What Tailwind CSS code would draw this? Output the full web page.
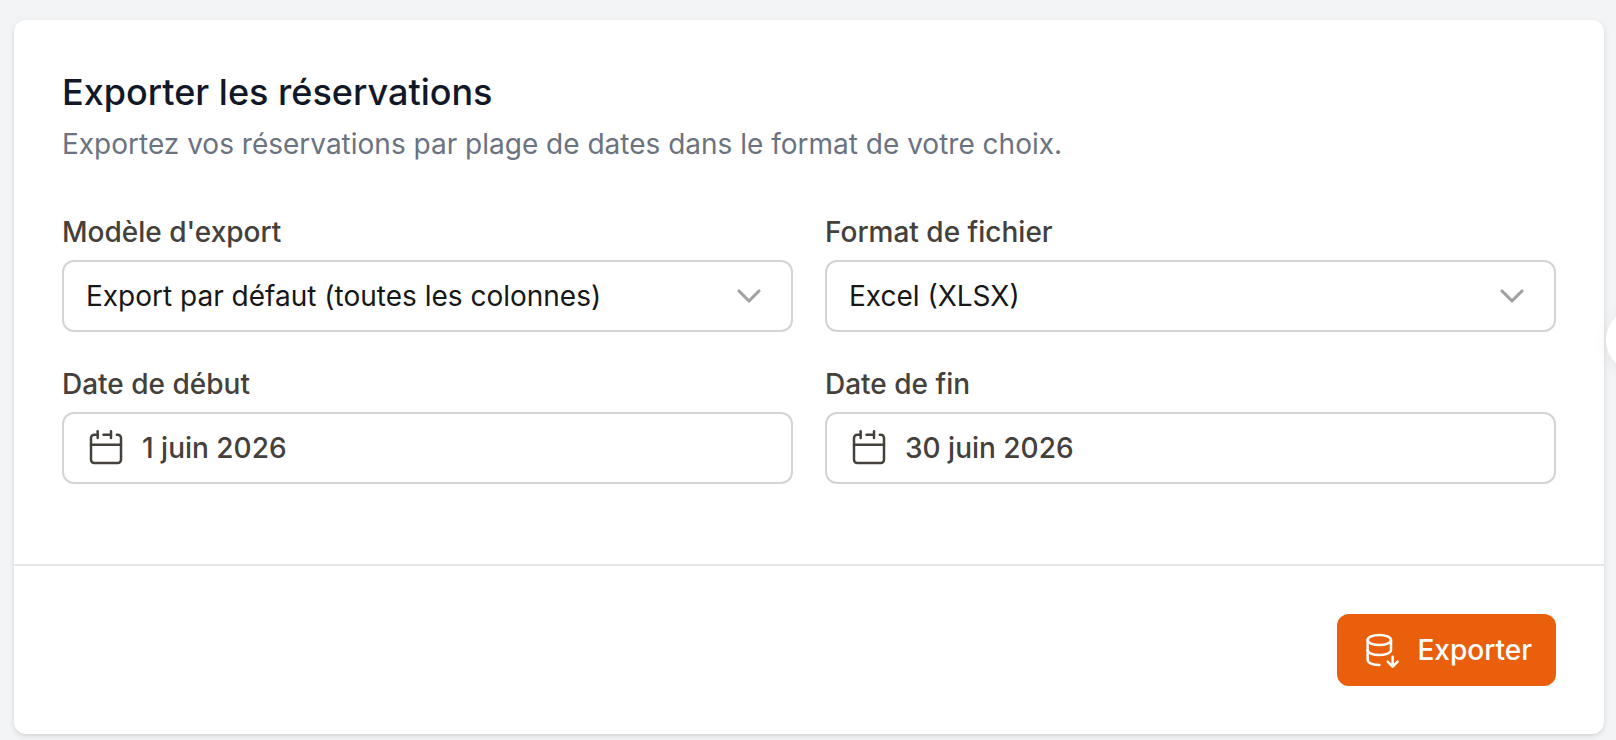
<!DOCTYPE html>
<html lang="fr">
<head>
    <meta charset="UTF-8">
    <meta name="viewport" content="width=device-width, initial-scale=1.0">
    <title>Exporter les réservations</title>
    <script src="https://cdn.jsdelivr.net/npm/@tailwindcss/browser@4"></script>
</head>
<body class="relative min-h-screen overflow-hidden bg-gray-100 pt-5 pr-3 pb-1.5 pl-3.5 font-['Inter',sans-serif] text-[28px] leading-10">
    <form class="rounded-xl bg-white shadow-[0_2px_6px_rgba(0,0,0,0.1),0_2px_4px_-2px_rgba(0,0,0,0.1)]" onsubmit="return false">
        <div class="px-12 pt-12 pb-20">
            <h1 class="text-4xl leading-12 font-medium text-[#111827]">Exporter les réservations</h1>
            <p class="mt-2 text-[#6b7280]">Exportez vos réservations par plage de dates dans le format de votre choix.</p>

            <div class="mt-12 grid grid-cols-2 gap-8">
                <div>
                    <label for="template" class="block font-medium text-[#44403c]">Modèle d'export</label>
                    <div class="relative mt-2">
                        <select id="template" class="block h-18 w-full appearance-none rounded-xl border-2 border-neutral-300 bg-white pr-18 pl-[22px] text-neutral-900">
                            <option>Export par défaut (toutes les colonnes)</option>
                        </select>
                        <svg class="pointer-events-none absolute top-4 right-6 size-10 text-neutral-400" viewBox="0 0 24 24" fill="none" stroke="currentColor" stroke-width="1.9" stroke-linecap="round" stroke-linejoin="round"><path d="M6 9l6 6 6-6"/></svg>
                    </div>
                </div>

                <div>
                    <label for="format" class="block font-medium text-[#44403c]">Format de fichier</label>
                    <div class="relative mt-2">
                        <select id="format" class="block h-18 w-full appearance-none rounded-xl border-2 border-neutral-300 bg-white pr-18 pl-[22px] text-neutral-900">
                            <option>Excel (XLSX)</option>
                        </select>
                        <svg class="pointer-events-none absolute top-4 right-6 size-10 text-neutral-400" viewBox="0 0 24 24" fill="none" stroke="currentColor" stroke-width="1.9" stroke-linecap="round" stroke-linejoin="round"><path d="M6 9l6 6 6-6"/></svg>
                    </div>
                </div>

                <div>
                    <label for="start" class="block font-medium text-[#44403c]">Date de début</label>
                    <div class="mt-2 flex h-18 items-center gap-4 rounded-xl border-2 border-neutral-300 bg-white px-[22px] text-[#44403c]">
                        <svg class="size-10 shrink-0" viewBox="0 0 24 24" fill="none" stroke="currentColor" stroke-width="1.5" stroke-linecap="round" stroke-linejoin="round"><path d="M15 4V2M15 4V6M15 4H10.5M3 10V19C3 20.1046 3.89543 21 5 21H19C20.1046 21 21 20.1046 21 19V10H3Z"/><path d="M3 10V6C3 4.89543 3.89543 4 5 4H7"/><path d="M7 2V6"/><path d="M21 10V6C21 4.89543 20.1046 4 19 4H18.5"/></svg>
                        <input id="start" type="text" value="1 juin 2026" class="w-full min-w-0 font-medium outline-none">
                    </div>
                </div>

                <div>
                    <label for="end" class="block font-medium text-[#44403c]">Date de fin</label>
                    <div class="mt-2 flex h-18 items-center gap-4 rounded-xl border-2 border-neutral-300 bg-white px-[22px] text-[#44403c]">
                        <svg class="size-10 shrink-0" viewBox="0 0 24 24" fill="none" stroke="currentColor" stroke-width="1.5" stroke-linecap="round" stroke-linejoin="round"><path d="M15 4V2M15 4V6M15 4H10.5M3 10V19C3 20.1046 3.89543 21 5 21H19C20.1046 21 21 20.1046 21 19V10H3Z"/><path d="M3 10V6C3 4.89543 3.89543 4 5 4H7"/><path d="M7 2V6"/><path d="M21 10V6C21 4.89543 20.1046 4 19 4H18.5"/></svg>
                        <input id="end" type="text" value="30 juin 2026" class="w-full min-w-0 font-medium outline-none">
                    </div>
                </div>
            </div>
        </div>

        <div class="flex justify-end border-t-2 border-neutral-200 px-12 py-12">
            <button type="submit" class="flex h-18 items-center gap-4 rounded-xl bg-[#ea5f0c] px-6 font-medium text-white hover:bg-orange-700">
                <svg class="size-10" viewBox="0 0 24 24" fill="none" stroke="currentColor" stroke-width="1.5" stroke-linecap="round" stroke-linejoin="round"><ellipse cx="11" cy="6" rx="7" ry="3"/><path d="M18 6v6c0 1.66-3.13 3-7 3s-7-1.34-7-3"/><path d="M4 6v12c0 1.66 3.13 3 7 3"/><path d="M19 16v6m0 0 3-3m-3 3-3-3"/></svg>
                Exporter
            </button>
        </div>
    </form>

    <!-- floating button, mostly off the right edge -->
    <button type="button" aria-label="Aide" class="absolute top-[308px] left-[calc(100%-10px)] size-16 rounded-full bg-white shadow-[0_2px_16px_rgba(0,0,0,0.06)]"></button>
</body>
</html>
